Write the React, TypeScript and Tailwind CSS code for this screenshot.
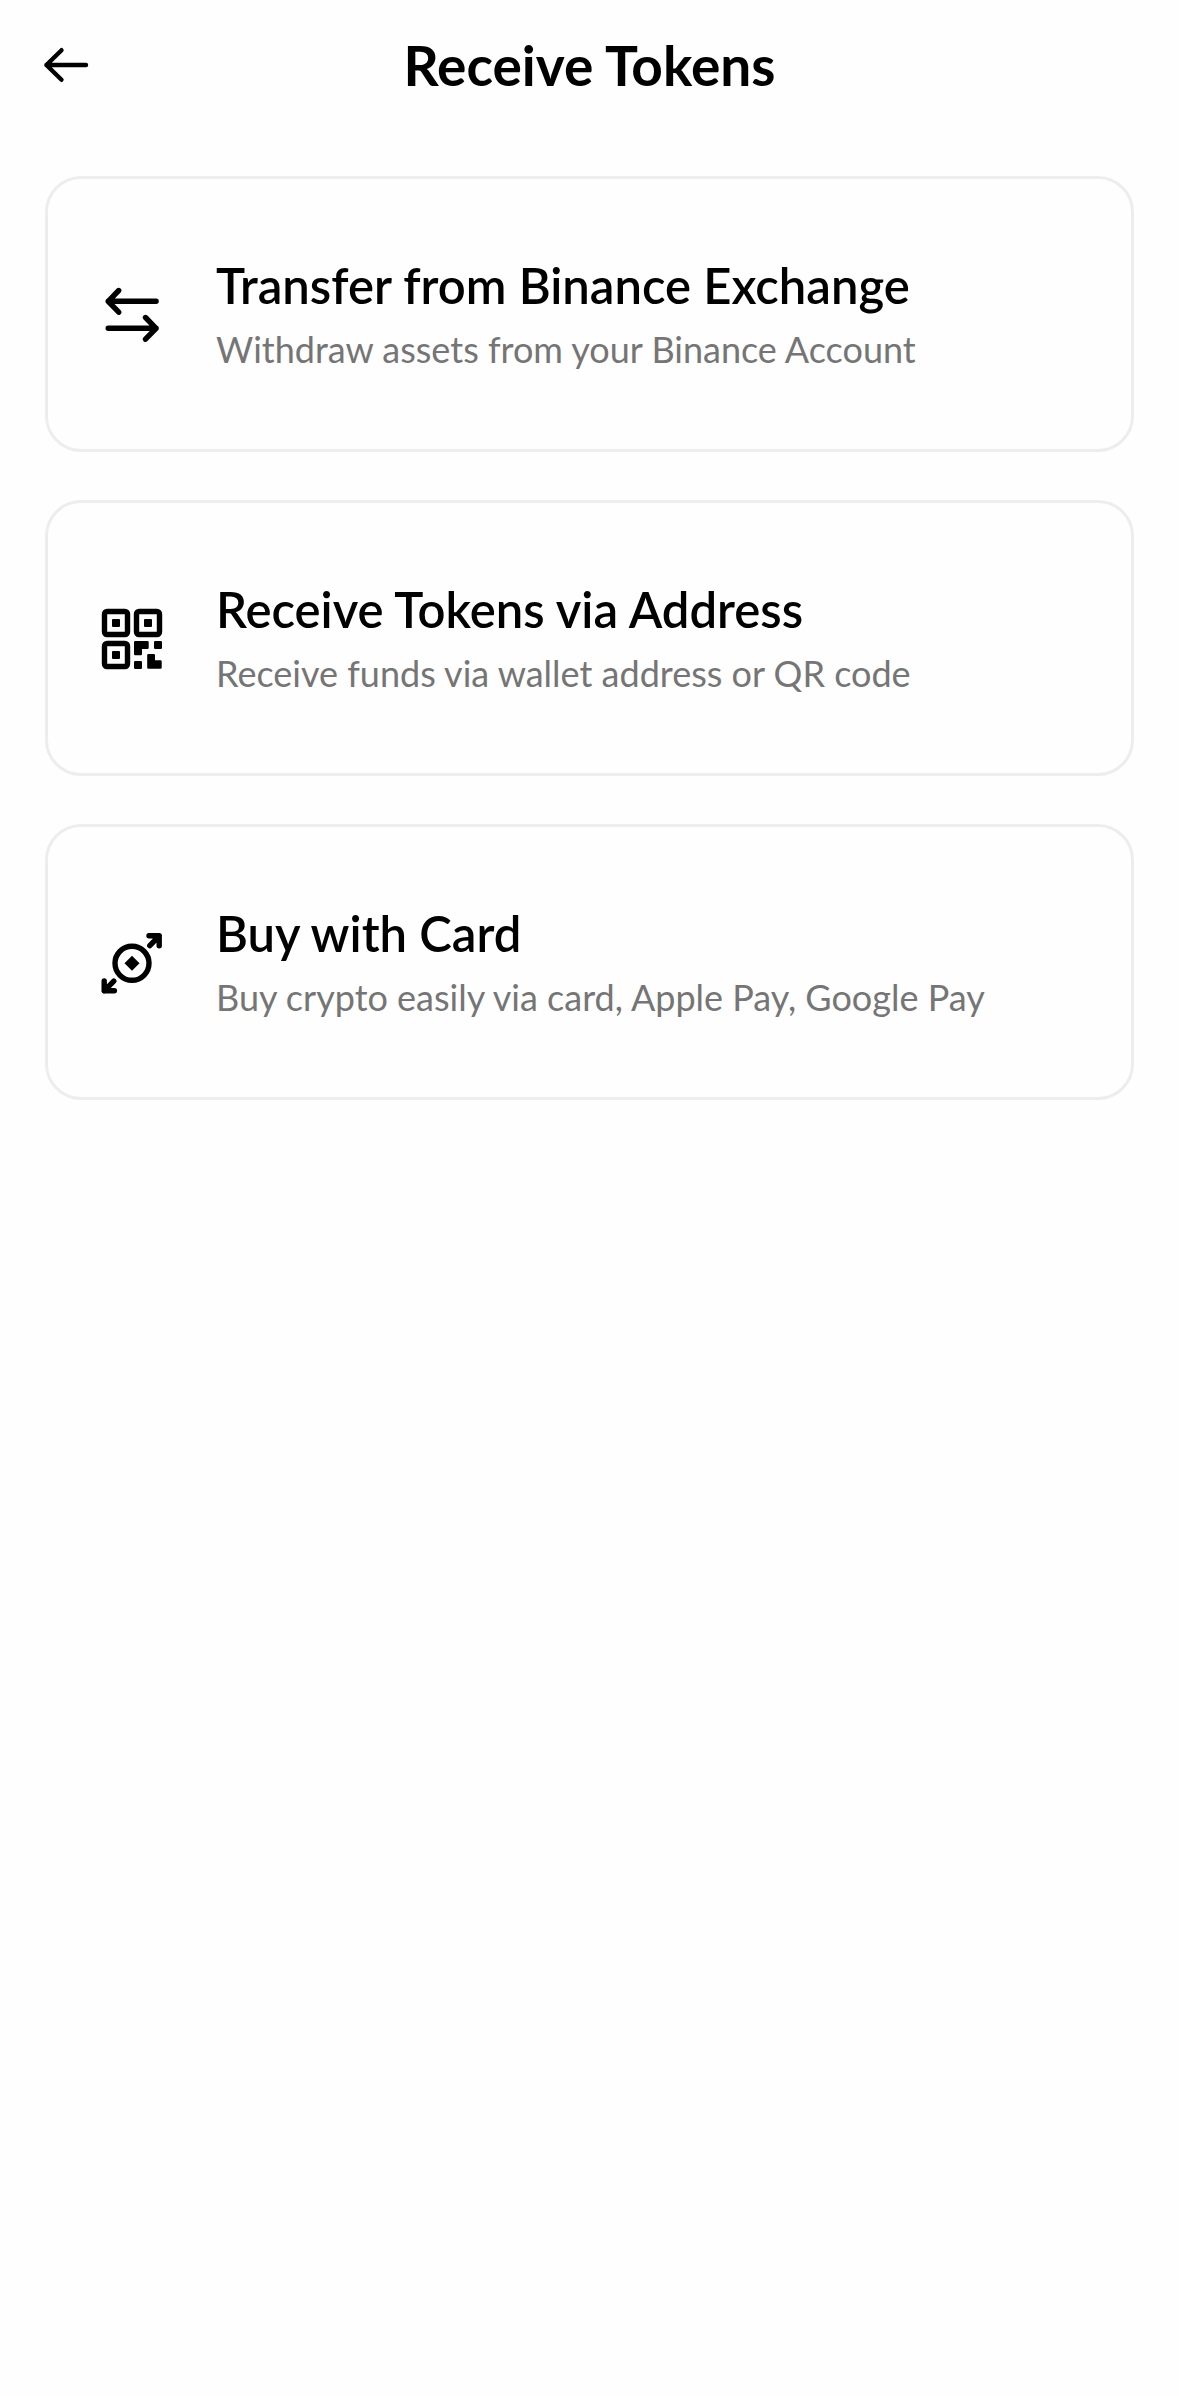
import type { ReactNode } from 'react'

interface Option {
  id: string
  title: string
  description: string
  icon: ReactNode
}

function BackIcon() {
  return (
    <svg viewBox="0 0 60 60" className="size-15" fill="none" stroke="currentColor" strokeWidth={4.4} strokeLinecap="round" strokeLinejoin="round" aria-hidden="true">
      <path d="M25.5 15.2 10.4 30l15.1 14.8M10.4 30H50" />
    </svg>
  )
}

function TransferIcon() {
  return (
    <svg viewBox="0 0 72 72" className="size-18" fill="none" stroke="currentColor" strokeWidth={5.4} strokeLinecap="round" strokeLinejoin="round" aria-hidden="true">
      <path d="M22.7 11.5 12.2 22.3l10.5 10.9M12.2 22.3h47.9" />
      <path d="m49.5 38.5 10.6 10.8-10.6 10.9M60.1 49.3H12.2" />
    </svg>
  )
}

function QrIcon() {
  return (
    <svg viewBox="0 0 72 72" className="size-18" aria-hidden="true">
      {/* Finder squares */}
      <g fill="none" stroke="currentColor" strokeWidth={5.4}>
        <rect x="8.5" y="8.5" width="23" height="23" rx="2.5" />
        <rect x="40.5" y="8.5" width="23" height="23" rx="2.5" />
        <rect x="8.5" y="40.5" width="23" height="23" rx="2.5" />
      </g>
      <g fill="currentColor">
        <rect x="16" y="16" width="8" height="8" rx="1" />
        <rect x="48" y="16" width="8" height="8" rx="1" />
        <rect x="16" y="48" width="8" height="8" rx="1" />
        {/* Loose modules */}
        <path d="M39.2 38h12.3a1.2 1.2 0 0 1 1.2 1.2v5.6a1.2 1.2 0 0 1-1.2 1.2H46v5a1.2 1.2 0 0 1-1.2 1.2h-5.6A1.2 1.2 0 0 1 38 51V39.2a1.2 1.2 0 0 1 1.2-1.2z" />
        <rect x="58" y="38" width="8" height="8" rx="1.2" />
        <rect x="38" y="58" width="8" height="8" rx="1.2" />
        <path d="M52.4 51h5.4a1.2 1.2 0 0 1 1.2 1.2v5.1h5.5a1.2 1.2 0 0 1 1.2 1.2v6.1a1.2 1.2 0 0 1-1.2 1.2H52.4a1.2 1.2 0 0 1-1.2-1.2V52.2a1.2 1.2 0 0 1 1.2-1.2z" />
      </g>
    </svg>
  )
}

function BuyIcon() {
  return (
    <svg viewBox="0 0 72 72" className="size-18" fill="none" stroke="currentColor" strokeWidth={5.4} strokeLinecap="round" strokeLinejoin="round" aria-hidden="true">
      <circle cx="36" cy="36.3" r="17" />
      <path d="M36 28.8l7.5 7.5-7.5 7.5-7.5-7.5z" fill="currentColor" stroke="none" />
      <path d="M53 8.8h10.2v10M63.2 8.8 53.8 18.6" />
      <path d="M8.2 54v9.8h10.2M8.2 63.8l9.6-9.6" />
    </svg>
  )
}

const OPTIONS: Option[] = [
  {
    id: 'transfer',
    title: 'Transfer from Binance Exchange',
    description: 'Withdraw assets from your Binance Account',
    icon: <TransferIcon />,
  },
  {
    id: 'address',
    title: 'Receive Tokens via Address',
    description: 'Receive funds via wallet address or QR code',
    icon: <QrIcon />,
  },
  {
    id: 'card',
    title: 'Buy with Card',
    description: 'Buy crypto easily via card, Apple Pay, Google Pay',
    icon: <BuyIcon />,
  },
]

function OptionCard({ option }: { option: Option }) {
  return (
    <button
      type="button"
      className="flex w-full items-center gap-12 rounded-[36px] border-3 border-[#ededed] px-12 pt-[76px] pb-[74px] text-left"
    >
      <span className="shrink-0">{option.icon}</span>
      <span className="flex min-w-0 flex-col gap-2">
        <span className="text-[49px] leading-[60px] font-semibold text-black">{option.title}</span>
        <span className="text-[36px] leading-[52px] text-[#757575]">{option.description}</span>
      </span>
    </button>
  )
}

export default function App() {
  return (
    <div className="min-h-screen bg-[#fefefe] font-['Lato',sans-serif] text-black">
      <header className="grid h-[130px] grid-cols-[60px_1fr_60px] items-center px-9">
        <button type="button" aria-label="Back">
          <BackIcon />
        </button>
        <h1 className="text-center text-[55px] leading-[64px] font-bold">Receive Tokens</h1>
      </header>

      <main className="flex flex-col gap-12 px-[45px] pt-[46px]">
        {OPTIONS.map((option) => (
          <OptionCard key={option.id} option={option} />
        ))}
      </main>
    </div>
  )
}
